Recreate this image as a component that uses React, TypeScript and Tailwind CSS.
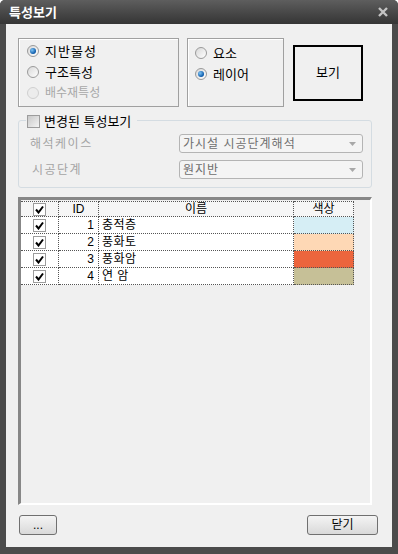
import React from 'react';

const FONT = { fontFamily: '"Liberation Sans", "Noto Sans CJK KR", sans-serif' };

type Row = { id: number; name: string; color: string };

const ROWS: Row[] = [
  { id: 1, name: '충적층', color: 'bg-[#d6eef5]' },
  { id: 2, name: '풍화토', color: 'bg-[#fed8b5]' },
  { id: 3, name: '풍화암', color: 'bg-[#ec653d]' },
  { id: 4, name: '연 암', color: 'bg-[#c6c097]' },
];

function Radio({ checked, disabled }: { checked?: boolean; disabled?: boolean }) {
  return (
    <span
      className={`w-[12px] h-[12px] rounded-full border flex items-center justify-center shrink-0 ${
        disabled
          ? 'border-[#d0d0d0] bg-[#ececec]'
          : 'border-[#9a9a9a] bg-gradient-to-br from-[#d8d8d8] to-white'
      }`}
    >
      {checked && (
        <span className="w-[6px] h-[6px] rounded-full bg-[radial-gradient(circle_at_35%_35%,#7ec4f5,#0a58a8_70%)]" />
      )}
    </span>
  );
}

function Check({ checked, disabled }: { checked?: boolean; disabled?: boolean }) {
  return (
    <span
      className={`w-[13px] h-[13px] border flex items-center justify-center shrink-0 ${
        disabled
          ? 'border-[#9c9c9c] bg-gradient-to-br from-[#c8c8c8] to-[#f4f4f4]'
          : 'border-[#9c9c9c] bg-white'
      }`}
    >
      {checked && (
        <svg width="9" height="9" viewBox="0 0 9 9">
          <path d="M1 4.5 L3.5 7.5 L8 1.5" fill="none" stroke="#000" strokeWidth="2" />
        </svg>
      )}
    </span>
  );
}

function Combo({ value }: { value: string }) {
  return (
    <div className="w-[184px] h-[19px] border border-[#b4b4b4] rounded-[3px] bg-[#f4f4f4] flex items-center justify-between pl-[3px] pr-[6px]">
      <span className="text-[12px] text-[#6e6e6e] leading-none tracking-[1px]">{value}</span>
      <svg width="7" height="4" viewBox="0 0 7 4">
        <path d="M0 0 H7 L3.5 4 Z" fill="#a8a8a8" />
      </svg>
    </div>
  );
}

function Button({ label, w }: { label: string; w: string }) {
  return (
    <button
      className={`${w} h-[20px] rounded-[3px] border border-[#707070] bg-gradient-to-b from-[#f4f4f4] to-[#d9d9d9] text-[12px] text-black leading-none flex items-center justify-center`}
    >
      {label}
    </button>
  );
}

export default function App() {
  return (
    <div className="w-[398px] h-[554px] bg-white" style={FONT}>
      <div className="w-full h-full bg-[#4b4b4b] rounded-t-[5px] flex flex-col overflow-hidden">
        <div className="h-[24px] shrink-0 bg-gradient-to-b from-[#5e5e5e] to-[#353535] flex items-center justify-between pl-[9px] pr-[10px]">
          <span className="text-white text-[13px] font-bold leading-none">특성보기</span>
          <svg width="10" height="10" viewBox="0 0 10 10">
            <path d="M1 1 L9 9 M9 1 L1 9" stroke="#c4c4c4" strokeWidth="2.4" />
          </svg>
        </div>

        <div className="mx-[6px] mb-[7px] flex-1 bg-[#f0f0f0] flex flex-col pt-[14px]">
          <div className="flex items-start pl-[12px]">
            <div className="w-[161px] h-[69px] border border-[#a0a0a0] shadow-[inset_1px_1px_0_#fff] flex flex-col pl-[8px] pt-[5px] gap-[7px]">
              <div className="flex items-center gap-[6px] h-[14px]">
                <Radio checked />
                <span className="text-[13px] leading-none text-black tracking-[1px]">지반물성</span>
              </div>
              <div className="flex items-center gap-[6px] h-[14px]">
                <Radio />
                <span className="text-[13px] leading-none text-black">구조특성</span>
              </div>
              <div className="flex items-center gap-[6px] h-[14px]">
                <Radio disabled />
                <span className="text-[12px] leading-none text-[#a8a8a8]">배수재특성</span>
              </div>
            </div>

            <div className="ml-[8px] w-[97px] h-[69px] border border-[#a0a0a0] shadow-[inset_1px_1px_0_#fff] flex flex-col pl-[7px] pt-[7px] gap-[7px]">
              <div className="flex items-center gap-[6px] h-[14px]">
                <Radio />
                <span className="text-[13px] leading-none text-black">요소</span>
              </div>
              <div className="flex items-center gap-[6px] h-[14px]">
                <Radio checked />
                <span className="text-[13px] leading-none text-black">레이어</span>
              </div>
            </div>

            <button className="ml-[9px] mt-[7px] w-[70px] h-[56px] border-2 border-black bg-[#f0f0f0] text-[13px] text-black flex items-center justify-center">
              보기
            </button>
          </div>

          <div className="ml-[12px] mt-[13px] w-[354px] h-[68px] border border-[#d4dce2] rounded-[3px] flex flex-col">
            <div className="-mt-[6px] ml-[7px] h-[12px] self-start bg-[#f0f0f0] flex items-center gap-[4px] pr-[6px] pl-[1px]">
              <Check disabled />
              <span className="text-[13px] leading-none text-black">변경된 특성보기</span>
            </div>
            <div className="mt-[7px] flex items-center h-[19px]">
              <span className="w-[160px] pl-[11px] text-[12px] text-[#a4a4a4] tracking-[1.5px] leading-none">해석케이스</span>
              <Combo value="가시설 시공단계해석" />
            </div>
            <div className="mt-[7px] flex items-center h-[19px]">
              <span className="w-[160px] pl-[13px] text-[12px] text-[#a4a4a4] tracking-[1.5px] leading-none">시공단계</span>
              <Combo value="원지반" />
            </div>
          </div>

          <div className="ml-[12px] mt-[9px] w-[354px] h-[308px] border-t-[3px] border-l-[3px] border-t-[#878787] border-l-[#878787] border-r-2 border-b-2 border-r-white border-b-white bg-[#f0f0f0] flex flex-col pt-px">
            <div className="flex h-[16px] text-[12px] leading-none">
              <div className="w-[38px] bg-[#f6f6f6] border-t border-b border-r border-dotted border-[#555] flex items-center justify-center">
                <Check checked />
              </div>
              <div className="w-[40px] bg-[#f6f6f6] border-t border-b border-r border-dotted border-[#555] flex items-center justify-center">
                ID
              </div>
              <div className="w-[195px] bg-[#f6f6f6] border-t border-b border-r border-dotted border-[#555] flex items-center justify-center">
                이름
              </div>
              <div className="w-[60px] bg-[#f6f6f6] border-t border-b border-r border-dotted border-[#555] flex items-center justify-center">
                색상
              </div>
            </div>
            {ROWS.map((r) => (
              <div key={r.id} className="flex h-[17px] text-[12px] leading-none">
                <div className="w-[38px] bg-white border-b border-r border-dotted border-[#555] flex items-center justify-center">
                  <Check checked />
                </div>
                <div className="w-[40px] bg-white border-b border-r border-dotted border-[#555] flex items-center justify-end pr-[4px]">
                  {r.id}
                </div>
                <div className="w-[195px] bg-white border-b border-r border-dotted border-[#555] flex items-center pl-[3px] tracking-[0.5px]">
                  {r.name}
                </div>
                <div className={`w-[60px] ${r.color} border-b border-r border-dotted border-[#555]`} />
              </div>
            ))}
          </div>

          <div className="mt-[10px] flex justify-between pl-[13px] pr-[14px]">
            <Button label="..." w="w-[38px]" />
            <Button label="닫기" w="w-[71px]" />
          </div>
        </div>
      </div>
    </div>
  );
}
